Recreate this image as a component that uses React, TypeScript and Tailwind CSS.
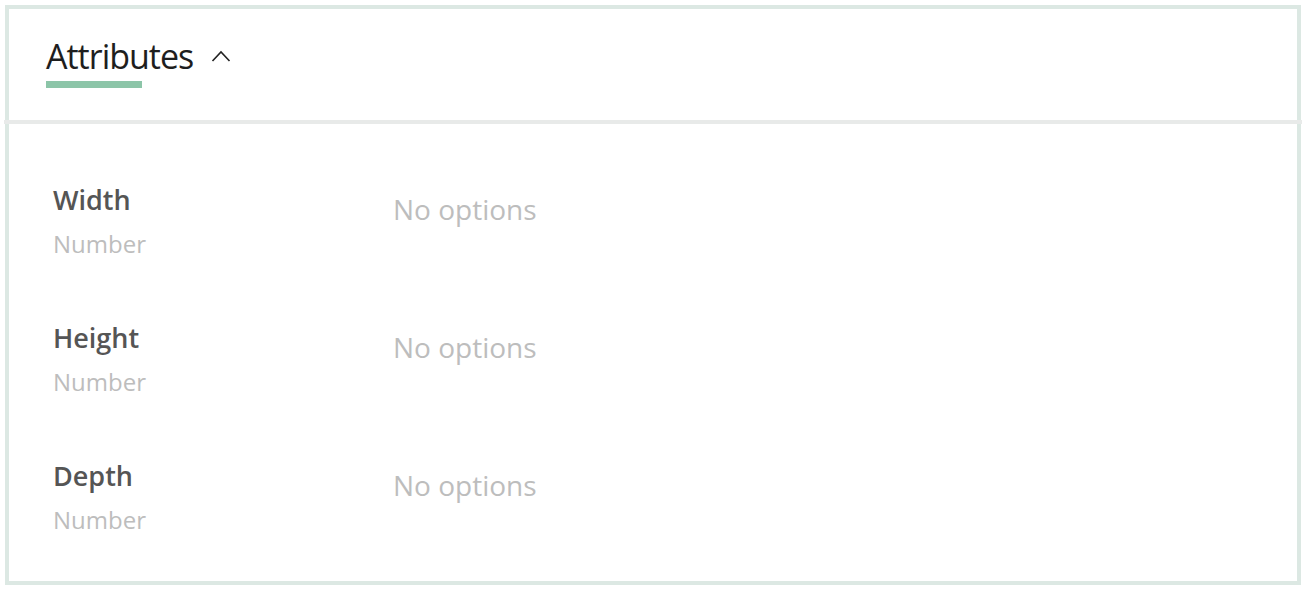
import React from "react";

const ATTRIBUTES = [
  { name: "Width", type: "Number" },
  { name: "Height", type: "Number" },
  { name: "Depth", type: "Number" },
];

export default function App() {
  return (
    <div
      className="min-h-screen w-full bg-white p-[5px]"
      style={{ fontFamily: '"Open Sans", "Noto Sans", sans-serif' }}
    >
      <section className="h-[580px] border-4 border-[#dce8e3] bg-white">
        {/* Header */}
        <header className="-mx-[5px] h-[115px] border-b-4 border-[#e8eae9] px-[42px] pt-[26px]">
          <button type="button" className="flex items-center gap-[18px]">
            <span className="flex flex-col">
              <span className="text-[34px] font-medium leading-[42px] tracking-[-1px] text-[#1e1e1e]">
                Attributes
              </span>
              <span className="mt-[4px] h-[7px] w-[96px] bg-[#8cc5a8]" />
            </span>
            <svg
              viewBox="0 0 20 12"
              className="-mt-[12px] h-[12px] w-[20px]"
              fill="none"
              stroke="#222"
              strokeWidth="1.6"
            >
              <path d="M1.5 11 L10 2 L18.5 11" />
            </svg>
          </button>
        </header>

        {/* Rows */}
        <ul className="flex flex-col px-[44px] pt-[57px]">
          {ATTRIBUTES.map((attr) => (
            <li key={attr.name} className="flex h-[138px] items-start">
              <div className="flex w-[340px] flex-col">
                <span className="text-[27px] font-semibold leading-[38px] text-[#555]">
                  {attr.name}
                </span>
                <span className="mt-[10px] text-[24px] leading-[30px] text-[#bdbdbd]">
                  {attr.type}
                </span>
              </div>
              <span className="pt-[9px] text-[28px] leading-[38px] text-[#bdbdbd]">
                No options
              </span>
            </li>
          ))}
        </ul>
      </section>
    </div>
  );
}
